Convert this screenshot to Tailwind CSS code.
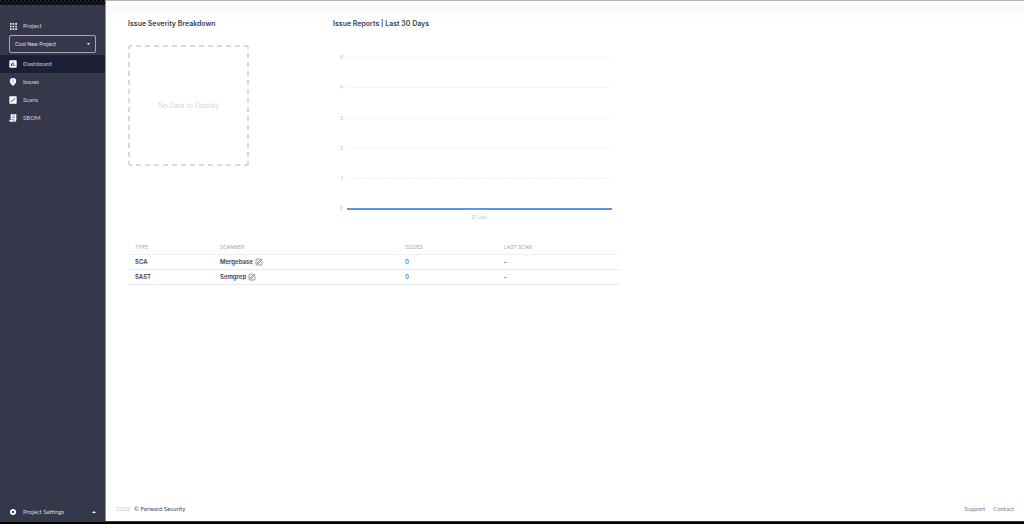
<!DOCTYPE html>
<html lang="en">
<head>
  <meta charset="UTF-8">
  <meta name="viewport" content="width=device-width, initial-scale=1">
  <title>Dashboard</title>
  <script src="https://cdn.jsdelivr.net/npm/@tailwindcss/browser@4"></script>
</head>
<body class="flex flex-col min-h-screen bg-white font-['Inter',sans-serif] text-[6px] leading-[10px] text-[#3d4053]">
  <div class="flex flex-1">

    <!-- Sidebar -->
    <aside class="flex flex-col w-[106px] shrink-0 bg-[#35384b] border-r border-[#8b8d98] font-['Lato',sans-serif] text-[#d3d5dc]">
      <div class="h-[5px] bg-[#0b0c12] bg-[conic-gradient(#000_25%,#1b2030_0_50%,#000_0_75%,#1b2030_0)] bg-[length:4px_4px]"></div>
      <label for="project" class="flex items-center gap-[6px] h-[18px] mt-[12px] px-[10px]">
        <svg class="size-[7px]" viewBox="0 0 7 7" fill="#e4e6eb"><path d="M0 0h1.7v1.7H0zM2.65 0h1.7v1.7h-1.7zM5.3 0H7v1.7H5.3zM0 2.65h1.7v1.7H0zM2.65 2.65h1.7v1.7h-1.7zM5.3 2.65H7v1.7H5.3zM0 5.3h1.7V7H0zM2.65 5.3h1.7V7h-1.7zM5.3 5.3H7V7H5.3z"/></svg>
        Project
      </label>
      <div class="relative mx-[9px] mb-[2px]">
        <select id="project" class="block w-full h-[18px] pl-[5px] rounded-[2px] border border-[#a6a8b3] bg-transparent appearance-none font-['Inter',sans-serif] text-[5px] leading-[10px] text-[#e2e3e8]">
          <option>Cool New Project</option>
        </select>
        <svg class="absolute right-[6px] top-[8px] w-[3px] h-[2px]" viewBox="0 0 3 2" fill="#fff"><path d="M0 0h3L1.5 2z"/></svg>
      </div>
      <nav>
        <a href="#" class="flex items-center gap-[6px] h-[18px] px-[9px] bg-[#1b2036]">
          <svg class="size-[8px]" viewBox="0 0 24 24" fill="#fff"><path fill-rule="evenodd" d="M3 1h18a2 2 0 0 1 2 2v18a2 2 0 0 1-2 2H3a2 2 0 0 1-2-2V3a2 2 0 0 1 2-2zM6 10v8h2.500v-8zM11 6v12h2.500V6zM16 14v4h2.500v-4z"/></svg>
          Dashboard
        </a>
        <a href="#" class="flex items-center gap-[6px] h-[18px] px-[9px]">
          <svg class="size-[8px]" viewBox="0 0 24 24" fill="#fff"><path fill-rule="evenodd" d="M12 0a9.500 9.500 0 0 1 9.500 9.500c0 6-4.500 9-9.500 14.500C7 18.500 2.500 15.500 2.500 9.500A9.500 9.500 0 0 1 12 0zM11 4v6h2V4zM11 13v2.500h2V13z"/></svg>
          Issues
        </a>
        <a href="#" class="flex items-center gap-[6px] h-[18px] px-[9px]">
          <svg class="size-[8px]" viewBox="0 0 24 24"><rect x="1" y="1" width="22" height="22" rx="2" fill="#fff"/><path d="M6 18l5-6 2 1 5-7" fill="none" stroke="#35384b" stroke-width="2.500"/></svg>
          Scans
        </a>
        <a href="#" class="flex items-center gap-[6px] h-[18px] px-[9px]">
          <svg class="size-[8px]" viewBox="0 0 24 24"><path d="M5 1h17v18a4 4 0 0 1-4 4H4a3 3 0 0 1-3-3v-3h4z" fill="#fff"/><path d="M9 6h9M9 11h9M3 17h12v3a3 3 0 0 0 3 2" fill="none" stroke="#35384b" stroke-width="1.500"/></svg>
          SBOM
        </a>
      </nav>
      <button class="flex items-center gap-[6px] h-[18px] mt-auto px-[9px] text-left">
        <svg class="size-[8px]" viewBox="0 0 24 24"><path d="M12 3v18M4.200 7.500l15.600 9M19.800 7.500l-15.600 9" stroke="#fff" stroke-width="6"/><circle cx="12" cy="12" r="8.500" fill="#fff"/><circle cx="12" cy="12" r="3.500" fill="#35384b"/></svg>
        <span class="flex-1">Project Settings</span>
        <svg class="w-[4px] h-[2px]" viewBox="0 0 4 2" fill="#fff"><path d="M0 2h4L2 0z"/></svg>
      </button>
    </aside>

    <div class="flex flex-col flex-1 border-t border-[#b5b5b5]">
      <div class="h-[4px]"></div>
      <div class="h-[14px] bg-linear-to-b from-[#f8f8f8] to-white"></div>

      <main class="w-[514px] pl-[22px]">
        <div class="flex">
          <section class="w-[205px]">
            <h2 class="text-[7px] font-semibold">Issue Severity Breakdown</h2>
            <div class="mt-[16px] grid size-[121px] place-items-center text-[7px] text-[#d3d6de]">
              <svg class="col-start-1 row-start-1" width="121" height="121" fill="none" stroke="#d5d9e3" stroke-width="2">
                <path stroke-dasharray="5 4" d="M1 1h119M1 120h119M1 1v119M120 1v119" stroke-dashoffset="2"/>
              </svg>
              <p class="col-start-1 row-start-1">No Data to Display</p>
            </div>
          </section>
          <section class="flex-1">
            <h2 class="text-[7px] font-semibold">Issue Reports | Last 30 Days</h2>
            <svg class="mt-[16px]" width="280" height="180" font-size="5" fill="#b9bdcc">
              <g stroke="#f0f0f3" stroke-dasharray="4 2">
                <path d="M14 12.500h265M14 42.500h265M14 73.500h265M14 103.500h265M14 133.500h265"/>
              </g>
              <path d="M14 164h265" stroke="#5a96dd" stroke-width="2"/>
              <g text-anchor="end">
                <text x="10" y="14">5</text>
                <text x="10" y="44">4</text>
                <text x="10" y="75">3</text>
                <text x="10" y="105">2</text>
                <text x="10" y="135">1</text>
                <text x="10" y="165">0</text>
              </g>
              <text x="146" y="174" text-anchor="middle">21 Jun</text>
            </svg>
          </section>
        </div>

        <table class="w-full mt-[16px] table-fixed text-left font-semibold">
          <thead class="text-[5px] text-[#a3a7b6]">
            <tr class="h-[13px] border-b border-dotted border-[#e3e5e9]">
              <th class="w-[85px] pl-[7px] font-normal">TYPE</th>
              <th class="w-[185px] pl-[7px] font-normal">SCANNER</th>
              <th class="w-[99px] pl-[7px] font-normal">ISSUES</th>
              <th class="pl-[7px] font-normal">LAST SCAN</th>
            </tr>
          </thead>
          <tbody>
            <tr class="h-[15px] border-b border-[#e9eaed]">
              <td class="pl-[7px]">SCA</td>
              <td class="pl-[7px]">
                <div class="flex items-center gap-[2px]">Mergebase
                  <button aria-label="Edit Mergebase"><svg class="block size-[8px]" viewBox="0 0 16 16" fill="none" stroke="#6a6d7c" stroke-width="1.500"><path d="M9 2H3.500A1.500 1.500 0 0 0 2 3.500v9A1.500 1.500 0 0 0 3.500 14h9a1.500 1.500 0 0 0 1.500-1.500V7M5 11l.5-2.500L12 2l2 2-6.500 6.500z"/></svg></button>
                </div>
              </td>
              <td class="pl-[7px]"><a href="#" class="text-[#4a8ad8]">0</a></td>
              <td class="pl-[7px]">-</td>
            </tr>
            <tr class="h-[15px] border-b border-[#e9eaed]">
              <td class="pl-[7px]">SAST</td>
              <td class="pl-[7px]">
                <div class="flex items-center gap-[2px]">Semgrep
                  <button aria-label="Edit Semgrep"><svg class="block size-[8px]" viewBox="0 0 16 16" fill="none" stroke="#6a6d7c" stroke-width="1.500"><path d="M9 2H3.500A1.500 1.500 0 0 0 2 3.500v9A1.500 1.500 0 0 0 3.500 14h9a1.500 1.500 0 0 0 1.500-1.500V7M5 11l.5-2.500L12 2l2 2-6.500 6.500z"/></svg></button>
                </div>
              </td>
              <td class="pl-[7px]"><a href="#" class="text-[#4a8ad8]">0</a></td>
              <td class="pl-[7px]">-</td>
            </tr>
          </tbody>
        </table>
      </main>

      <footer class="flex items-center mt-auto mb-[7px] px-[10px] font-['Lato',sans-serif]">
        <span class="text-[#c3c8d9]">2023</span>
        <a href="#" class="ml-[4px]">© Forward Security</a>
        <a href="#" class="ml-auto text-[#7c8091]">Support</a>
        <a href="#" class="ml-[8px] text-[#7c8091]">Contact</a>
      </footer>
    </div>
  </div>
  <div class="h-[3px] bg-black border-t border-[#35384b]"></div>
</body>
</html>
